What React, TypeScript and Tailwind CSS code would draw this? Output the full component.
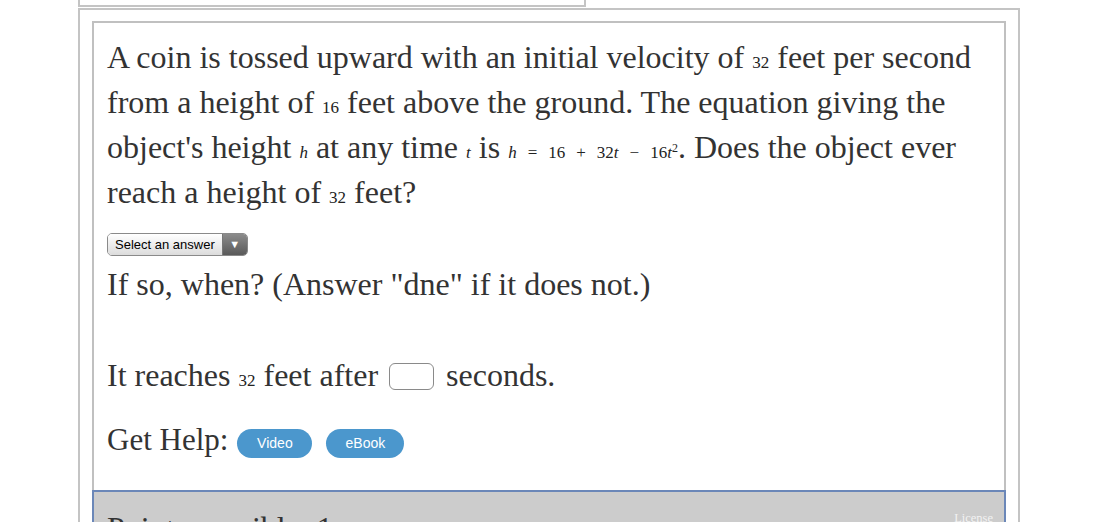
import React from "react";

function M({ children }: { children: React.ReactNode }) {
  return <span className="font-['Liberation_Serif',serif] text-[17px] leading-none text-[#222]">{children}</span>;
}

export default function App() {
  return (
    <div className="w-[1112px] h-[522px] overflow-hidden bg-white font-['Liberation_Serif',serif] text-[#333]">
      <div className="pl-[78px] pr-[92px]">
        <div className="w-[508px] h-[7px] border-x-2 border-b-2 border-[#c4c4c4]" />
        <div className="mt-px border-2 border-[#c4c4c4] px-[12px] pt-[11px] h-[600px]">
          <div className="border-x-2 border-t-2 border-[#c0c0c0] pl-[13px] pr-[12px] pt-[12px] pb-[28px]">
            <p className="text-[32px] leading-[45px]">
              A coin is tossed upward with an initial velocity of <M>32</M> feet per second from a height of{" "}
              <M>16</M> feet above the ground. The equation giving the object's height <M><i>h</i></M> at any time{" "}
              <M><i>t</i></M> is{" "}
              <M>
                <i>h</i>
                <span className="mx-[11px]">=</span>16<span className="mx-[11px]">+</span>32<i>t</i>
                <span className="mx-[11px]">−</span>16<i>t</i>
                <sup className="text-[12px]">2</sup>
              </M>
              . Does the object ever reach a height of <M>32</M> feet?
            </p>
            <div className="mt-[18px] flex">
              <div className="flex h-[23px] rounded-[5px] border border-[#8a8a8a] overflow-hidden font-['Liberation_Sans',sans-serif] text-[13px] text-black">
                <div className="flex items-center pl-[7px] pr-[7px] bg-gradient-to-b from-[#ffffff] to-[#dcdcdc]">
                  Select an answer
                </div>
                <div className="flex items-center justify-center w-[25px] border-l border-[#777] bg-gradient-to-b from-[#8c8c8c] to-[#5a5a5a] text-white text-[11px]">
                  ▼
                </div>
              </div>
            </div>
            <p className="mt-[6px] text-[32px] leading-[45px]">If so, when? (Answer "dne" if it does not.)</p>
            <div className="mt-[46px] text-[32px] leading-[45px] flex items-start">
              <span>
                It reaches <M>32</M> feet after
              </span>
              <span className="block ml-[11px] mr-[12px] w-[45px] h-[27px] mt-[10px] rounded-[6px] border border-[#8a8a8a] bg-white" />
              <span>seconds.</span>
            </div>
            <div className="mt-[19px] flex items-start h-[45px]">
              <span className="text-[31px] leading-[45px]">Get Help:</span>
              <span className="ml-[9px] mt-[12px] flex items-center justify-center w-[75px] h-[29px] rounded-full bg-[#4b97cd] text-white font-['Liberation_Sans',sans-serif] text-[14px]">
                Video
              </span>
              <span className="ml-[14px] mt-[12px] flex items-center justify-center w-[78px] h-[29px] rounded-full bg-[#4b97cd] text-white font-['Liberation_Sans',sans-serif] text-[14px]">
                eBook
              </span>
            </div>
          </div>
          <div className="border-2 border-[#6b87b8] bg-[#cccccc] pl-[13px] pr-[11px] pt-[14px] flex justify-between items-start">
            <span className="text-[32px] leading-[45px] text-[#333]">Points possible: 1</span>
            <span className="text-[12.5px] leading-[16px] text-[#f2f2f2] mt-[4px]">License</span>
          </div>
        </div>
      </div>
    </div>
  );
}
